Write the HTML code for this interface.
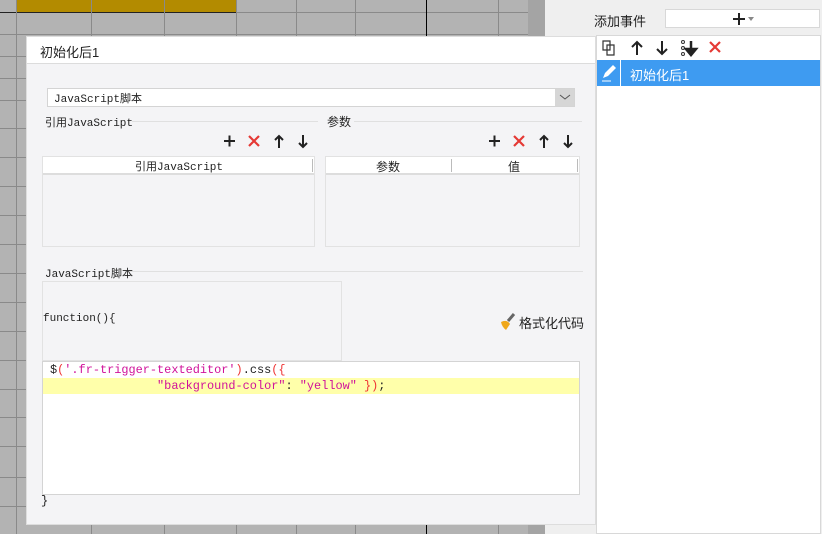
<!DOCTYPE html>
<html><head><meta charset="utf-8"><style>
*{margin:0;padding:0;box-sizing:border-box}
body{width:822px;height:534px;position:relative;overflow:hidden;background:#b3b3b3;font-family:"Liberation Sans","Noto Sans CJK SC",sans-serif;font-size:12px;color:#222}
.a{position:absolute}
.vl{position:absolute;top:0;width:1px;height:534px;background:#8a8a8a}
.hl{position:absolute;left:0;width:528px;height:1px;background:#8a8a8a}
.mono{font-family:"Liberation Mono","Noto Sans CJK SC",monospace}
.ic{position:absolute}
</style></head><body>
<!-- grid -->
<div class="a" style="left:16px;top:0;width:220px;height:12px;background:#b38b00"></div>
<div class="hl" style="top:12px;background:#222;width:236px;left:0"></div>
<div class="hl" style="top:12px;left:236px;width:292px"></div>
<div class="hl" style="top:34px"></div><div class="hl" style="top:56px"></div><div class="hl" style="top:78px"></div>
<div class="hl" style="top:100px"></div><div class="hl" style="top:128px"></div><div class="hl" style="top:157px"></div>
<div class="hl" style="top:186px"></div><div class="hl" style="top:215px"></div><div class="hl" style="top:244px"></div>
<div class="hl" style="top:273px"></div><div class="hl" style="top:302px"></div><div class="hl" style="top:331px"></div>
<div class="hl" style="top:360px"></div><div class="hl" style="top:389px"></div><div class="hl" style="top:417px"></div>
<div class="hl" style="top:446px"></div><div class="hl" style="top:477px"></div><div class="hl" style="top:506px"></div>
<div class="vl" style="left:16px"></div><div class="vl" style="left:91px"></div><div class="vl" style="left:164px"></div>
<div class="vl" style="left:236px"></div><div class="vl" style="left:296px"></div><div class="vl" style="left:355px"></div>
<div class="vl" style="left:426px;background:#000"></div><div class="vl" style="left:498px"></div>
<div class="a" style="left:528px;top:0;width:17px;height:534px;background:#a4a4a4"></div>
<!-- right panel -->
<div class="a" style="left:545px;top:0;width:277px;height:534px;background:#efefef"></div>
<div class="a" style="left:594px;top:11px;font-size:13px">添加事件</div>
<div class="a" style="left:665px;top:9px;width:155px;height:19px;background:#fff;border:1px solid #d8d8d8"></div>
<div class="a" style="left:733px;top:18px;width:12px;height:2px;background:#222"></div>
<div class="a" style="left:738px;top:13px;width:2px;height:12px;background:#222"></div>
<div class="a" style="left:748px;top:17px;border:3px solid transparent;border-top:4px solid #888"></div>
<div class="a" style="left:596px;top:35px;width:225px;height:499px;background:#fff;border:1px solid #d8d8d8"></div>
<svg class="ic" style="left:600px;top:38px" width="125" height="20">
<path d="M3 3h7v9H3z M7 7h7v10H7z" fill="#fff" stroke="#333" stroke-width="1.2"/>
<path d="M37 4v13 M32 9l5-5 5 5" stroke="#222" stroke-width="2" fill="none"/>
<path d="M62 3v13 M57 11l5 5 5-5" stroke="#222" stroke-width="2" fill="none"/>
<circle cx="83" cy="4" r="1.5" fill="none" stroke="#333"/><circle cx="83" cy="10" r="1.5" fill="none" stroke="#333"/><circle cx="83" cy="16" r="1.5" fill="none" stroke="#333"/>
<path d="M91 3v10 M86 11h10l-5 6z" stroke="#222" stroke-width="2.5" fill="#222"/>
<path d="M110 4l10 10 M120 4l-10 10" stroke="#e53935" stroke-width="2.2"/>
</svg>
<div class="a" style="left:597px;top:60px;width:223px;height:26px;background:#3e9bf1"></div>
<div class="a" style="left:620px;top:60px;width:1px;height:26px;background:#fff"></div>
<svg class="ic" style="left:600px;top:63px" width="18" height="20"><path d="M3 15l2-5 8-8 3 3-8 8z" fill="#fff"/><path d="M2 18h9" stroke="#fff"/></svg>
<div class="a" style="left:630px;top:65px;color:#fff;font-size:13px">初始化后1</div>
<!-- dialog -->
<div class="a" style="left:26px;top:36px;width:570px;height:489px;background:#f4f4f6;border:1px solid #ddd"></div>
<div class="a" style="left:27px;top:37px;width:568px;height:27px;background:#fff;border-bottom:1px solid #dcdcdc"></div>
<div class="a" style="left:40px;top:42px;font-size:13px">初始化后1</div>
<div class="a" style="left:47px;top:88px;width:528px;height:19px;background:#fff;border:1px solid #d4d4d4"></div>
<div class="a" style="left:555px;top:89px;width:19px;height:17px;background:#d6d6d6"></div>
<svg class="ic" style="left:559px;top:93px" width="12" height="8"><path d="M1 2l5 4 5-4" stroke="#555" fill="none"/></svg>
<div class="a mono" style="left:54px;top:90px;font-size:11px">JavaScript脚本</div>
<div class="a mono" style="left:45px;top:114px;font-size:11px">引用JavaScript</div>
<div class="a" style="left:132px;top:121px;width:186px;height:1px;background:#e0e0e0"></div>
<div class="a" style="left:327px;top:113px;font-size:12px">参数</div>
<div class="a" style="left:354px;top:121px;width:228px;height:1px;background:#e0e0e0"></div>
<svg class="ic" style="left:220px;top:133px" width="360" height="16">
<path d="M4 8h11 M9.5 2.5v11" stroke="#222" stroke-width="2"/>
<path d="M29 3l10 10 M39 3l-10 10" stroke="#e53935" stroke-width="2.2"/>
<path d="M59 3v12 M55 7l4-4 4 4" stroke="#222" stroke-width="2" fill="none"/>
<path d="M83 2v12 M79 10l4 4 4-4" stroke="#222" stroke-width="2" fill="none"/>
<path d="M269 8h11 M274.5 2.5v11" stroke="#222" stroke-width="2"/>
<path d="M294 3l10 10 M304 3l-10 10" stroke="#e53935" stroke-width="2.2"/>
<path d="M324 3v12 M320 7l4-4 4 4" stroke="#222" stroke-width="2" fill="none"/>
<path d="M348 2v12 M344 10l4 4 4-4" stroke="#222" stroke-width="2" fill="none"/>
</svg>
<div class="a" style="left:42px;top:156px;width:273px;height:91px;border:1px solid #e2e2e2"></div>
<div class="a" style="left:43px;top:157px;width:271px;height:18px;background:#fff;border-bottom:2px solid #ddd"></div>
<div class="a" style="left:312px;top:159px;width:1px;height:13px;background:#bbb"></div>
<div class="a mono" style="left:135px;top:158px;font-size:11px">引用JavaScript</div>
<div class="a" style="left:325px;top:156px;width:255px;height:91px;border:1px solid #e2e2e2"></div>
<div class="a" style="left:326px;top:157px;width:253px;height:18px;background:#fff;border-bottom:2px solid #ddd"></div>
<div class="a" style="left:451px;top:159px;width:1px;height:13px;background:#bbb"></div>
<div class="a" style="left:577px;top:159px;width:1px;height:13px;background:#bbb"></div>
<div class="a" style="left:376px;top:158px">参数</div>
<div class="a" style="left:508px;top:158px">值</div>
<div class="a mono" style="left:45px;top:265px;font-size:11px">JavaScript脚本</div>
<div class="a" style="left:130px;top:271px;width:453px;height:1px;background:#e0e0e0"></div>
<div class="a" style="left:42px;top:281px;width:300px;height:80px;border:1px solid #e2e2e2"></div>
<div class="a mono" style="left:43px;top:313px;font-size:11px">function(){</div>
<svg class="ic" style="left:499px;top:312px" width="18" height="18"><path d="M2 10q6-3 9 2l-4 6q-4-3-5-8z" fill="#f0a81a"/><path d="M9 9l6-7" stroke="#666" stroke-width="3"/></svg>
<div class="a" style="left:519px;top:313px;font-size:13px">格式化代码</div>
<div class="a" style="left:42px;top:361px;width:538px;height:134px;background:#fff;border:1px solid #d4d4d4"></div>
<div class="a" style="left:43px;top:378px;width:536px;height:16px;background:#ffffaa"></div>
<div class="a mono" style="left:50px;top:362px;font-size:11.9px;line-height:16px;white-space:pre">$<span style="color:#e33">(</span><span style="color:#d0129a">'.fr-trigger-texteditor'</span><span style="color:#e33">)</span>.css<span style="color:#e33">({</span>
               <span style="color:#d0129a">"background-color"</span>: <span style="color:#d0129a">"yellow"</span> <span style="color:#e33">})</span>;</div>
<div class="a mono" style="left:41px;top:494px;font-size:12px">}</div>
</body></html>
